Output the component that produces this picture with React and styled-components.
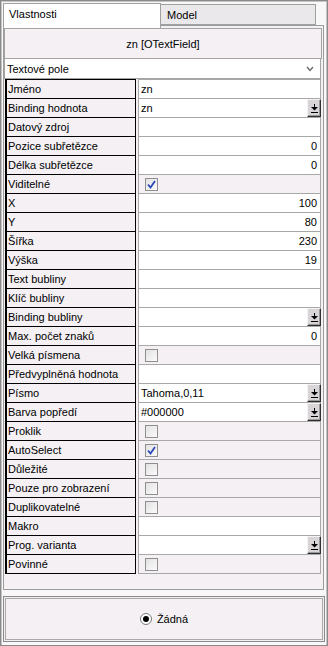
import React from 'react';
import styled, { createGlobalStyle } from 'styled-components';

const GlobalStyle = createGlobalStyle`
  html, body {
    margin: 0;
    padding: 0;
    background: #f8f8f8;
  }
  * {
    box-sizing: border-box;
  }
`;

const lavender = '#f4f0f4';

const Frame = styled.div`
  width: 328px;
  height: 646px;
  border: 1px solid #8a8a8a;
  box-shadow: inset 1px 1px 0 #c4c4c4, inset -1px 0 0 #c4c4c4;
  padding: 2px 2px 0 2px;
  background: #f8f8f8;
  font-family: "Liberation Sans", Arial, sans-serif;
  font-size: 11px;
  color: #000;
  overflow: hidden;
`;

const TabBar = styled.div`
  display: flex;
  align-items: flex-start;
  height: 22px;
`;

const Tab = styled.div`
  position: relative;
  z-index: ${(p) => (p.active ? 1 : 0)};
  width: ${(p) => p.width}px;
  height: ${(p) => (p.active ? 25 : 21)}px;
  margin-top: ${(p) => (p.active ? 0 : 1)}px;
  padding: ${(p) => (p.active ? '4px 0 0 5px' : '4px 0 0 6px')};
  background: ${(p) => (p.active ? '#ffffff' : '#ebe8eb')};
  border: 1px solid #a0a0a0;
  border-bottom: ${(p) => (p.active ? 'none' : '1px solid #a0a0a0')};
  border-left: ${(p) => (p.active ? '1px solid #a0a0a0' : 'none')};
`;

const Panel = styled.div`
  width: 321px;
  border: 1px solid #9c9c9c;
  background: ${lavender};
  padding: 2px 0 15px 0;
`;

const Header = styled.div`
  height: 31px;
  margin-right: 1px;
  border: 1px solid #a4a4a4;
  background: ${lavender};
  display: flex;
  align-items: center;
  justify-content: center;
`;

const Select = styled.div`
  height: 20px;
  width: 317px;
  border: 1px solid #a4a4a4;
  border-top: none;
  background: #fff;
  display: flex;
  align-items: center;
  justify-content: space-between;
  padding: 0 6px 0 2px;
`;

const Table = styled.div`
  margin-left: 1px;
  width: 316px;
  display: flex;
  flex-direction: column;
`;

const Row = styled.div`
  display: flex;
  height: ${(p) => (p.first ? 20 : 19)}px;
`;

const Label = styled.div`
  width: 131px;
  border-left: 2px solid #000;
  border-right: 1px solid #000;
  border-bottom: 1px solid #000;
  border-top: ${(p) => (p.first ? '1px solid #000' : 'none')};
  background: ${lavender};
  padding-left: 1px;
  display: flex;
  align-items: center;
  white-space: nowrap;
`;

const Value = styled.div`
  width: 183px;
  margin-left: 2px;
  border: 1px solid #a8a8a8;
  border-top: ${(p) => (p.first ? '1px solid #a8a8a8' : 'none')};
  background: ${(p) => (p.plain ? lavender : '#fff')};
  display: flex;
  align-items: center;
  justify-content: ${(p) => (p.right ? 'flex-end' : 'flex-start')};
  padding: ${(p) => (p.right ? '0 3px 0 0' : '0 0 0 2px')};
  white-space: nowrap;
`;

const ValueText = styled.span`
  flex: ${(p) => (p.grow ? 1 : 'none')};
`;

const DropButton = styled.div`
  width: 14px;
  height: 18px;
  margin-right: -1px;
  background: #d8d4d8;
  border-top: 1px solid #f4f4f4;
  border-left: 1px solid #f4f4f4;
  border-right: 1px solid #303030;
  border-bottom: 1px solid #303030;
  box-shadow: inset -1px -1px 0 #9a9a9a;
  display: flex;
  align-items: center;
  justify-content: center;
`;

const Check = styled.div`
  width: 13px;
  height: 13px;
  margin-left: 4px;
  border: 1px solid #8f8f8f;
  background: linear-gradient(135deg, #e2e2e2, #fbfbfb);
  display: flex;
  align-items: center;
  justify-content: center;
`;

const Bottom = styled.div`
  margin-top: 6px;
  width: 322px;
  height: 46px;
  border: 1px solid #8a8a8a;
  box-shadow: inset 0 0 0 1px ${lavender}, inset 0 0 0 2px #a8a8a8;
  background: ${lavender};
  display: flex;
  align-items: center;
  justify-content: center;
  gap: 5px;
`;

const Radio = styled.div`
  width: 12px;
  height: 12px;
  border-radius: 50%;
  border: 1px solid #7a7a7a;
  background: #fff;
  display: flex;
  align-items: center;
  justify-content: center;
  &::after {
    content: '';
    width: 6px;
    height: 6px;
    border-radius: 50%;
    background: #000;
  }
`;

const rows = [
  { label: 'Jméno', value: 'zn' },
  { label: 'Binding hodnota', value: 'zn', button: true },
  { label: 'Datový zdroj' },
  { label: 'Pozice subřetězce', value: '0', right: true },
  { label: 'Délka subřetězce', value: '0', right: true },
  { label: 'Viditelné', check: true, checked: true },
  { label: 'X', value: '100', right: true },
  { label: 'Y', value: '80', right: true },
  { label: 'Šířka', value: '230', right: true },
  { label: 'Výška', value: '19', right: true },
  { label: 'Text bubliny' },
  { label: 'Klíč bubliny' },
  { label: 'Binding bubliny', button: true },
  { label: 'Max. počet znaků', value: '0', right: true },
  { label: 'Velká písmena', check: true },
  { label: 'Předvyplněná hodnota' },
  { label: 'Písmo', value: 'Tahoma,0,11', button: true },
  { label: 'Barva popředí', value: '#000000', button: true },
  { label: 'Proklik', check: true },
  { label: 'AutoSelect', check: true, checked: true },
  { label: 'Důležité', check: true },
  { label: 'Pouze pro zobrazení', check: true },
  { label: 'Duplikovatelné', check: true },
  { label: 'Makro' },
  { label: 'Prog. varianta', button: true },
  { label: 'Povinné', check: true },
];

const ArrowIcon = () => (
  <svg width="7" height="9" viewBox="0 0 7 9">
    <rect x="3" y="0" width="1" height="3" fill="#000" />
    <polygon points="0,3 7,3 3.5,6.5" fill="#000" />
    <rect x="0" y="8" width="7" height="1" fill="#000" />
  </svg>
);

const Chevron = () => (
  <svg width="8" height="6" viewBox="0 0 8 6">
    <polyline points="1,1 4,4.5 7,1" fill="none" stroke="#6a6a6a" strokeWidth="1.4" />
  </svg>
);

const Tick = () => (
  <svg width="9" height="9" viewBox="0 0 9 9">
    <polyline points="1,4.5 3.5,7.5 8,1" fill="none" stroke="#2a48b8" strokeWidth="1.8" />
  </svg>
);

const App = () => {
  return (
    <>
      <GlobalStyle />
      <Frame>
        <TabBar>
          <Tab active width={158}>Vlastnosti</Tab>
          <Tab width={155}>Model</Tab>
        </TabBar>
        <Panel>
          <Header>zn [OTextField]</Header>
          <Select>
            <span>Textové pole</span>
            <Chevron />
          </Select>
          <Table>
            {rows.map((r, i) => (
              <Row key={r.label} first={i === 0}>
                <Label first={i === 0}>{r.label}</Label>
                <Value first={i === 0} right={r.right} plain={r.check}>
                  {r.check ? (
                    <Check>{r.checked && <Tick />}</Check>
                  ) : (
                    <ValueText grow={r.button}>{r.value}</ValueText>
                  )}
                  {r.button && (
                    <DropButton>
                      <ArrowIcon />
                    </DropButton>
                  )}
                </Value>
              </Row>
            ))}
          </Table>
        </Panel>
        <Bottom>
          <Radio />
          <span>Žádná</span>
        </Bottom>
      </Frame>
    </>
  );
};

export default App;
